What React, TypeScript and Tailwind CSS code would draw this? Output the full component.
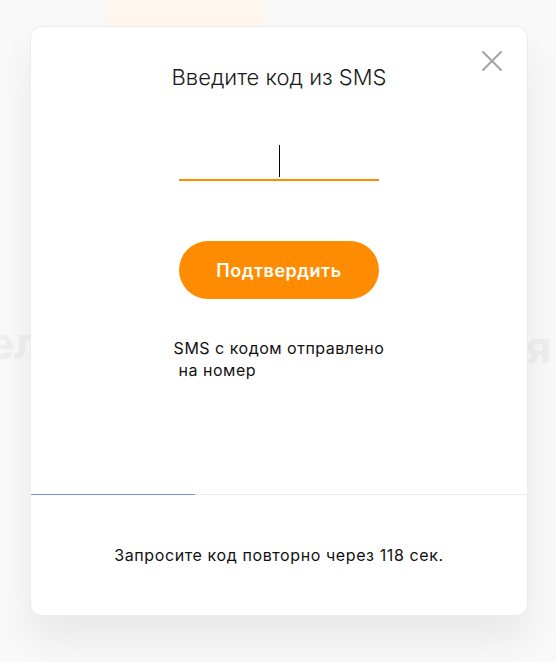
function CloseButton() {
  return (
    <button className="absolute top-[23px] right-[24px] flex h-[22px] w-[22px] items-center justify-center">
      <svg width="22" height="22" viewBox="0 0 22 22" fill="none">
        <path d="M1.5 1.5L20.5 20.5M20.5 1.5L1.5 20.5" stroke="#a3a3a3" strokeWidth="2" />
      </svg>
    </button>
  );
}

export default function App() {
  const seconds = 118;
  const progress = 33; // percent of timer elapsed

  return (
    <div
      className="relative min-h-[662px] w-full overflow-hidden bg-[#f9f9f9]"
      style={{ fontFamily: "Inter, 'Open Sans', sans-serif" }}
    >
      {/* faded page content behind the dialog */}
      <div className="pointer-events-none absolute inset-0">
        <div className="absolute left-[105px] top-[-20px] h-[80px] w-[160px] rounded-b-[30px] bg-[#fff7ef]" />
        <div className="absolute left-[-12px] top-[310px] text-[44px] font-bold text-[#efefef]">ел</div>
        <div className="absolute left-[526px] top-[314px] text-[44px] font-bold text-[#efefef]">я</div>
      </div>

      <div className="relative pl-[30px] pt-[26px]">
        <div className="relative w-[498px] rounded-xl border border-[#ececec] bg-white shadow-[0_24px_40px_rgba(0,0,0,0.07)]">
          <CloseButton />

          <h2 className="pt-[35px] text-center text-[22px] font-light leading-[30px] text-[#1a1a1a]">
            Введите код из SMS
          </h2>

          <div className="mt-[49px] flex justify-center">
            <div className="flex h-[40px] w-[200px] items-start justify-center border-b-2 border-[#ff8c00] pt-[4px]">
              <div className="h-[32px] w-px bg-black" />
            </div>
          </div>

          <div className="mt-[60px] flex justify-center">
            <button className="h-[58px] w-[200px] rounded-full bg-[#ff8c00] text-[18px] font-semibold tracking-[0.5px] text-white">
              Подтвердить
            </button>
          </div>

          <div className="mt-[38px] flex justify-center">
            <p className="text-left text-[16px] leading-[22px] tracking-[0.5px] text-[#111]">
              SMS с кодом отправлено
              <br />
              &nbsp;на номер
            </p>
          </div>

          <div className="mt-[113px] h-px w-full bg-[#ebebeb]">
            <div className="h-px bg-[#7f91da]" style={{ width: `${progress}%` }} />
          </div>

          <div className="flex h-[120px] items-center justify-center text-[16px] tracking-[0.6px] text-[#111]">
            Запросите код повторно через {seconds} сек.
          </div>
        </div>
      </div>
    </div>
  );
}
